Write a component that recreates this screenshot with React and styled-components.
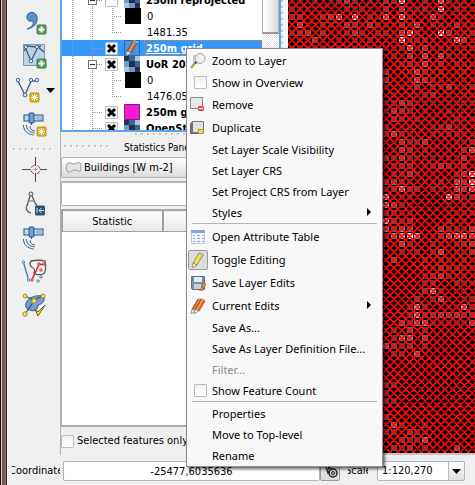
import React from "react";
import styled, { createGlobalStyle, css } from "styled-components";

const panelFont = '"DejaVu Sans Condensed", "Noto Sans", sans-serif';
const menuFont = '"Noto Sans", "Open Sans", sans-serif';
const crossMark =
  "url(\"data:image/svg+xml,%3Csvg xmlns='http://www.w3.org/2000/svg' viewBox='0 0 11 11'%3E%3Cpath d='M2 2L9 9M9 2L2 9' stroke='black' stroke-width='3'/%3E%3C/svg%3E\")";

const GlobalStyle = createGlobalStyle`
  * { box-sizing: border-box; }
  body { margin: 0; background: #efefef; overflow: hidden; }
  button, input, select { font: inherit; color: inherit; margin: 0; }
`;

const Page = styled.div`
  position: relative;
  display: flex;
  min-height: 100vh;
  font: 11px/16px ${panelFont};
  color: #000;
  background: #efefef;
`;

const WindowEdge = styled.div`
  flex: 0 0 8px;
  background: linear-gradient(90deg, #17100f 0 1px, #d9cfcc 1px 2px, #7a5a55 2px 5px, #94746e 5px 6px, #2a1a18 6px 7px, #fff 7px);
`;

const Workspace = styled.div`
  flex: 1;
  min-width: 0;
  display: flex;
  flex-direction: column;
`;

const Main = styled.main`
  flex: 1;
  min-height: 0;
  display: flex;
`;

const Toolbar = styled.div`
  flex: 0 0 52px;
  display: flex;
  flex-direction: column;
  padding-top: 5px;
`;

const Tool = styled.button`
  display: flex;
  align-items: center;
  height: 34px;
  padding: 0 0 0 ${(p) => (p.$menu ? "6px" : "13px")};
  gap: 4px;
  border: 0;
  background: none;
`;

const Grip = styled.div`
  flex: ${(p) => (p.$vertical ? "0 0 7px" : `0 0 ${p.$length}px`)};
  height: ${(p) => (p.$vertical ? "auto" : "6px")};
  background-color: #efefef;
  background-image: radial-gradient(circle at 1px 1px, #c3c3c3 1px, transparent 1px),
    radial-gradient(circle at 2px 2px, #fff 1px, transparent 1px);
  background-size: 6px 6px;
  ${(p) => p.$vertical && css`border-right: 2px solid #f8f8f8;`}
`;

const ToolGrip = styled.div`
  height: 12px;
  padding: 7px 6px 0 5px;
  display: flex;
`;

const Docks = styled.div`
  flex: 0 0 221px;
  min-width: 0;
  display: flex;
  flex-direction: column;
`;

const LayersPanel = styled.section`
  display: flex;
  height: 132px;
  overflow: hidden;
  border: 2px solid #5ba6ee;
  border-top: 0;
  background: #fff;
`;

const Tree = styled.ul`
  flex: 1;
  min-width: 0;
  list-style: none;
  margin: -8px 0 0;
  padding: 0;
`;

const TreeRow = styled.li`
  display: flex;
  align-items: center;
  height: 16px;
  white-space: nowrap;
  background: ${(p) => (p.$selected ? "#3397fd" : "transparent")};
`;

const Guides = styled.svg`
  flex: none;
  height: 16px;
  fill: none;
  stroke: #999;
  stroke-dasharray: 1 1;
  shape-rendering: crispEdges;
`;

const CheckBox = styled.input`
  appearance: none;
  flex: none;
  width: 13px;
  height: 13px;
  border: 1px solid #bcbcbc;
  border-radius: 1px;
  background: ${crossMark} center / 0 0 no-repeat, linear-gradient(#f0f0f0, #fff);
  &:checked { background-size: 11px 11px, auto; }
`;

const LayerIcon = styled.svg`
  flex: none;
  width: 16px;
  height: 16px;
  margin-left: ${(p) => (p.$child ? "1px" : "6px")};
  margin-right: 4px;
`;

const LayerName = styled.label`
  flex: 1;
  min-width: 0;
  height: 16px;
  line-height: 18px;
  padding-left: 2px;
  overflow: hidden;
  font-weight: ${(p) => (p.$bold ? 700 : 400)};
  ${(p) =>
    p.$selected &&
    css`
      color: #fff;
      text-decoration: underline;
      outline: 1px dotted #e08020;
      outline-offset: -1px;
    `}
`;

const ScrollTrack = styled.div`
  flex: 0 0 17px;
  background: repeating-conic-gradient(#e6e6e6 0 25%, #fff 0 50%) 0 0 / 2px 2px;
`;

const ScrollThumb = styled.div`
  height: 34px;
  border: 1px solid #b0b0b0;
  border-top: 0;
  border-bottom: 2px solid #999;
  background: linear-gradient(90deg, #fff, #ddd);
`;

const StatsPanel = styled.section`
  flex: 1;
  min-height: 0;
  display: flex;
  flex-direction: column;
  border-left: 1px solid #b0b0b0;
`;

const SplitRow = styled.div`
  display: flex;
  justify-content: center;
  padding-top: 1px;
`;

const StatsTitle = styled.h2`
  display: flex;
  align-items: center;
  gap: 12px;
  height: 18px;
  margin: 0;
  padding: 0 3px;
  font: 10px/16px ${panelFont};
  white-space: nowrap;
`;

const LayerCombo = styled.button`
  display: flex;
  align-items: center;
  gap: 2px;
  height: 21px;
  padding: 0 3px;
  border: 1px solid #b4b4b4;
  border-radius: 2px;
  background: linear-gradient(#fff, #dcdcdc);
  white-space: nowrap;
`;

const FieldInput = styled.input`
  height: 25px;
  margin: 3px 0;
  border: 1px solid #b4b4b4;
  border-width: 2px 1px 1px;
  border-radius: 2px;
  background: #fff;
`;

const TableFrame = styled.div`
  flex: 1;
  border: 1px solid #aaa;
  border-bottom-width: 2px;
  background: #fff;
`;

const StatsTable = styled.table`
  width: 100%;
  border-collapse: collapse;
  table-layout: fixed;
`;

const HeaderCell = styled.th`
  width: ${(p) => (p.$first ? "100px" : "auto")};
  height: 21px;
  padding: 2px 0 0;
  border: 1px solid #a0a0a0;
  border-width: 1px 2px 1px 1px;
  background: linear-gradient(#fcfcfc, #e8e8e8);
  font-weight: 400;
`;

const SelectedOnly = styled.div`
  display: flex;
  align-items: center;
  gap: 3px;
  height: 28px;
  white-space: nowrap;
`;

const MapCanvas = styled.div`
  flex: 1;
  min-width: 0;
  border-bottom: 2px solid #c4c4c4;
  background: #000;
  overflow: hidden;
`;

const MapDrawing = styled.svg`
  display: block;
`;

const StatusBar = styled.footer`
  display: flex;
  align-items: center;
  height: 30px;
  padding: 2px 0 0 4px;
  white-space: nowrap;
`;

const StatusLabel = styled.label`
  flex: 0 0 ${(p) => p.$width}px;
  overflow: hidden;
  text-indent: -3px;
`;

const CoordinateInput = styled.input`
  flex: 1 1 257px;
  min-width: 0;
  max-width: 257px;
  height: 20px;
  margin-left: 3px;
  padding: 0;
  border: 1px solid #b4b4b4;
  border-radius: 2px;
  background: #fff;
  text-align: center;
`;

const ExtentsButton = styled.button`
  flex: 0 0 20px;
  height: 20px;
  margin: 0 8px 0 0;
  padding: 0;
  border: 1px solid #999;
  border-radius: 2px;
  background: #ddd;
`;

const ScaleBox = styled.div`
  flex: 0 0 88px;
  display: flex;
  height: 20px;
  margin: 0 10px 0 9px;
  border: 1px solid #b4b4b4;
  border-radius: 2px;
  background: #fff;
`;

const ScaleSelect = styled.select`
  appearance: none;
  flex: 1;
  min-width: 0;
  padding: 0 4px;
  border: 0;
  background: none;
`;

const ScaleArrow = styled.div`
  flex: 0 0 16px;
  display: grid;
  place-items: center;
  border-left: 1px solid #bbb;
  background: linear-gradient(#fff, #e0e0e0);
`;

const Menu = styled.div`
  position: absolute;
  left: 186px;
  top: 48px;
  width: 197px;
  display: flex;
  flex-direction: column;
  border: 1px solid #8c8c8c;
  background: #f8f8f8;
  box-shadow: 2px 2px 3px rgba(0, 0, 0, 0.6);
  font: 11px/16px ${menuFont};
`;

const itemStyles = css`
  display: flex;
  align-items: center;
  height: ${(p) => (p.$tall ? "23px" : "21px")};
  padding: 0 9px 0 1px;
  border: 0;
  background: none;
  font: inherit;
  color: ${(p) => (p.disabled ? "#8a8a8a" : "#000")};
  text-align: left;
  white-space: nowrap;
`;

const MenuButton = styled.button`${itemStyles}`;
const MenuCheck = styled.label`${itemStyles}`;

const MenuSlot = styled.span`
  flex: 0 0 20px;
  display: flex;
  justify-content: ${(p) => (p.$check ? "flex-end" : "center")};
  align-items: center;
  height: 20px;
  margin-right: 4px;
  border: 1px solid ${(p) => (p.$pressed ? "#999" : "transparent")};
  border-radius: 2px;
  background: ${(p) => (p.$pressed ? "#dcdcdc" : "none")};
`;

const MenuText = styled.span`
  flex: 1;
`;

const Separator = styled.hr`
  width: auto;
  height: 2px;
  margin: 0 5px;
  border: 0;
  border-top: 1px solid #b4b4b4;
`;

/* Lit cells of the raster: row -> [column, brightness 0-9] */
const litCells = {
  0: "7:5 14:9 12:4 19:7 6:3 8:3 17:3", 1: "14:5 19:8 12:4 9:3 17:3",
  2: "0:4 1:4 4:4 5:5 6:7 8:8 12:7 14:8 18:6 10:3 15:3", 3: "1:6 7:5 8:4 10:5 16:6 14:4 21:5",
  4: "0:3 1:4 2:5 4:4 8:5 7:3 14:6 15:8 19:9 20:5 11:3 12:3", 5: "3:5 14:9 21:8 22:5 15:3 16:3",
  6: "15:7 17:5 14:3", 7: "15:5 17:6 19:6", 8: "15:4 17:6 19:4", 9: "12:5 16:6 17:4", 10: "12:5 16:6 17:5",
  11: "16:4 18:3 20:5 19:3", 12: "18:4", 13: "14:5 15:4 13:3", 14: "14:4 13:5 15:3", 15: "13:4 16:3",
  16: "20:5 12:3", 17: "13:6 12:4 14:3 20:3 21:3", 18: "14:5 17:5 15:3", 19: "14:5 15:4 23:6 17:3 22:4",
  20: "12:4 14:5 22:5 13:3 15:3", 21: "14:4 15:4 19:5 20:4 22:4 18:3", 22: "13:3 15:5 22:5 23:9 14:3",
  23: "12:4 13:5 21:6 22:5 23:9 14:3", 24: "13:4 14:7 15:4 16:4 21:6 22:5 23:7", 25: "12:8 20:8 21:5",
  26: "12:7 13:5 14:3", 27: "12:4 13:3", 28: "12:8 13:4 15:4 14:3", 29: "12:6 13:4 14:6 15:5 19:5 23:5 20:3",
  30: "13:6 14:7 15:9 16:7 19:4 20:6 21:7 22:7 23:6", 31: "14:6 15:3 22:4 23:5 21:3", 32: "14:3 19:6 23:4 18:3",
  33: "13:5 19:3 22:3", 34: "19:4 21:3 20:3", 35: "18:4 19:5 17:3", 36: "18:3 17:3", 37: "18:7 17:4", 38: "19:6 16:4 23:3",
  39: "16:7 22:7 15:3 17:3 23:3", 40: "16:7 15:3 17:4 18:4 19:5 20:5 21:5 22:4 23:4", 41: "14:5 16:6 17:6 23:5 15:3",
  42: "15:5 13:3 17:3", 43: "14:6 15:6 17:5 13:3", 44: "12:6 13:4 14:3 15:4 17:3", 45: "14:3 16:6 13:3",
  49: "12:3 13:3", 50: "12:3", 51: "12:3 13:3", 53: "12:4", 54: "13:6 14:3", 55: "13:3 15:4 16:3 12:3",
  56: "14:4 17:6 16:3 15:3", 57: "13:4 15:4 17:3 21:5 14:3",
};

const shade = (v) => {
  const g = [0, 26, 42, 62, 84, 110, 140, 175, 210, 250][v];
  return `rgb(${g},${g},${g})`;
};

function buildCells() {
  const cells = [];
  for (let r = 0; r < 58; r += 1) {
    const lit = Object.fromEntries((litCells[r] || "").split(" ").map((s) => s.split(":").map(Number)));
    for (let c = 0; c < 24; c += 1) {
      const noise = (c * 73 + r * 151 + c * r * 17) % 7;
      const quiet = (r > 24 && r < 30 && c > 15 && c < 20) || (r > 32 && c < 17) || (r > 41 && c > 17) || (r > 44 && r < 53);
      const dim = noise < 2 ? 1 : noise < 4 ? 2 : noise < 5 ? 3 : 0;
      const v = lit[c] ?? (quiet ? 0 : dim);
      if (v) cells.push({ c, r, v });
    }
  }
  return cells;
}
const cells = buildCells();
const P = 7.84;
const mapHeight = 453;

/* Long diagonals that cross at the centre of every cell */
const hatch = Array.from({ length: 110 }, (_, k) => {
  const fall = 1.2 - 4 + (k - 40) * P;
  const rise = 1.2 + 4 + k * P;
  return `M0 ${fall}l900 900M0 ${rise}l900 -900`;
}).join("");

function RasterMap() {
  return (
    <MapCanvas>
      <MapDrawing width="100%" height={mapHeight} aria-label="Map">
        {cells.map(({ c, r, v }) => (
          <rect key={`${c}-${r}`} x={c * P + 0.9} y={r * P - 1.8} width="6" height="6" fill={shade(v)} shapeRendering="crispEdges" />
        ))}
        <path d={hatch} stroke="#f90808" strokeWidth="1.7" fill="none" />
      </MapDrawing>
    </MapCanvas>
  );
}

const PlusBadge = () => (
  <g>
    <rect x="16" y="17" width="9" height="9" rx="1" fill="#5a9a5a" stroke="#3f7d42" />
    <path d="M20.5 18.5v6M17.5 21.5h6" stroke="#fff" strokeWidth="2" />
  </g>
);
const StarBadge = () => (
  <g>
    <rect x="16" y="17" width="9" height="9" rx="1" fill="#d9b520" stroke="#b99612" />
    <path d="M20.5 18v7M17 21.5h7M18 19l5 5M23 19l-5 5" stroke="#fff" strokeWidth="1" />
  </g>
);
const Satellite = ({ star }) => (
  <g>
    <rect x="3" y="5" width="19" height="6" fill="#c3dcf2" stroke="#28517e" />
    <path d="M15 6h6v4h-6z" fill="#9ebfe2" />
    <rect x="8" y="3" width="5" height="10" rx="1" fill="#729fcf" stroke="#28517e" />
    <path d="M10.500 13v2" stroke="#28517e" />
    <path d="M9 16c0 3 2 5 5 5M5.500 15c0 5 3 7 8 8M2.500 15c0 6 4 9 10 10" fill="none" stroke="#3c6387" strokeWidth="1" />
    {star && <StarBadge />}
  </g>
);

const toolIcons = {
  comma: (
    <>
      <path d="M6 21c5-2 7-5 6-8-4 1-7-1-6-5 1-5 9-5 10 1 1 6-3 11-10 12z" fill="#5e8fc7" stroke="#34638f" />
      <PlusBadge />
    </>
  ),
  polygon: (
    <>
      <path d="M2.500 2.500h21v21h-21z" fill="#bcd2e8" stroke="#7f98ae" />
      <path d="M4 5l6 14 7-14 6 5M3 9l3-5 10 1 4-1" fill="none" stroke="#44586c" strokeWidth="1.300" />
      <g fill="#e8f1fa" stroke="#456a8c"><circle cx="5" cy="5" r="1.600" /><circle cx="16" cy="5" r="1.600" /><circle cx="10" cy="19" r="1.800" /></g>
      <PlusBadge />
    </>
  ),
  vertices: (
    <>
      <path d="M4 5l7 14 6-14h6" fill="none" stroke="#4f6477" strokeWidth="1.400" />
      <g fill="#dbeafa" stroke="#3e6d9c"><circle cx="4" cy="4" r="1.700" /><circle cx="11" cy="19" r="1.900" /><circle cx="17" cy="4" r="1.700" /><circle cx="23" cy="4" r="1.700" /></g>
      <StarBadge />
    </>
  ),
  satelliteStar: <Satellite star />,
  crosshair: (
    <>
      <path d="M14.500 1v9M14.500 17v9M1 13.500h9M19 13.500h7" stroke="#4c4c4c" />
      <path d="M14.500 12v3M13 13.500h3" stroke="#999" />
      <circle cx="14.500" cy="13.500" r="4.500" fill="none" stroke="#c63b3b" strokeDasharray="4 3.070" strokeDashoffset="-1.500" />
    </>
  ),
  compass: (
    <>
      <path d="M9 6L6 16M11 6l4 9" stroke="#555" strokeWidth="1.200" /><path d="M7 11h7" stroke="#777" />
      <circle cx="10" cy="4" r="2" fill="#ddd" stroke="#555" />
      <path d="M6 15c-2 4 0 7 4 8M15 14l1 2" fill="none" stroke="#666" strokeWidth="1.300" />
      <rect x="14" y="15.500" width="10" height="10" rx="1.500" fill="#34526b" />
      <path d="M16 18v5M18 20.500h5M20.500 18l-2.500 2.500 2.500 2.500" fill="none" stroke="#cfe0ee" />
    </>
  ),
  satellite: <Satellite />,
  reshape: (
    <>
      <path d="M10 3c4-1 11-1 14 0 1 5 1 12-2 13-3 1-8 1-9-1 1-3 1-4-1-5-3-1-4-5-2-7z" fill="#f3f3f3" stroke="#555" strokeWidth="1.300" />
      <path d="M2.500 4.500l5 17" stroke="#3f79b8" strokeWidth="1.300" />
      <path d="M11 21.500l7-15h5" fill="none" stroke="#e01b1b" strokeWidth="1.500" />
      <g fill="#fff" stroke="#3f79b8"><circle cx="2.500" cy="4" r="1.200" /><circle cx="7.500" cy="22" r="1.200" /><circle cx="20" cy="19" r="1.200" /><circle cx="17" cy="23" r="1.200" /></g>
      <g fill="#fff" stroke="#e01b1b"><circle cx="18" cy="6" r="1.200" /><circle cx="23" cy="6" r="1.200" /><circle cx="20" cy="12" r="1.200" /><circle cx="11" cy="22" r="1.200" /></g>
    </>
  ),
  topology: (
    <>
      <path d="M6 9c3-5 12-6 17-5 1 6-2 8-6 9 0 5-4 7-9 5-4-2-4-6-2-9z" fill="#729fcf" stroke="#35628f" />
      <path d="M4 4l9 4 9-4M13 9L4 22" fill="none" stroke="#3d5266" strokeWidth="1.200" />
      <g fill="#fce94f" stroke="#a08c32"><circle cx="4" cy="4" r="2" /><circle cx="22" cy="4" r="2" /><rect x="11" y="7" width="4" height="4" /><circle cx="4" cy="22" r="2.200" /></g>
      <path d="M14 17l3 3 7-7-7 11z" fill="#ffe100" stroke="#6d6215" />
    </>
  ),
};

function ToolIcon({ name }) {
  return <svg width="28" height="28" viewBox="0 0 28 28">{toolIcons[name]}</svg>;
}

const Arrow = ({ right }) => (
  <svg width="9" height="9" viewBox="0 0 9 9"><path d={right ? "M3 0v8l4-4z" : "M0 2h9L4.500 7z"} /></svg>
);

const Pencil = ({ color, dark, x = 0 }) => (
  <g transform={`translate(${x} 0)`}>
    <path d="M9 1l4 2-6 10-4-2z" fill={color} stroke={dark} strokeWidth=".8" />
    <path d="M10.500 2L5 12" stroke="#fff" strokeOpacity=".45" />
    <path d="M3 11l4 2-5 3z" fill="#eee" stroke="#777" strokeWidth=".7" />
    <path d="M9 1l1-1 4 2-1 1z" fill="#bbb" />
  </g>
);

const menuIcons = {
  zoom: <><path d="M3 2h6v8H3z" fill="#ccc" /><circle cx="10" cy="5.500" r="5" fill="#eeeeee" fillOpacity=".85" stroke="#a5a5a5" /><path d="M5 10l-4 5" stroke="#b79a4a" strokeWidth="2.200" /><path d="M6.500 9L5 10.500" stroke="#444" strokeWidth="2" /></>,
  remove: <><path d="M.5.5h12v11H.5z" fill="#e8e8e8" stroke="#888" /><rect x="8" y="9" width="6" height="5" rx="1" fill="#ed4b50" /><path d="M9 11.500h4" stroke="#fff" /></>,
  duplicate: <><path d="M.5 3.500l2-2v10h10v2H.5z" fill="#777" stroke="#666" /><path d="M2.500 1.500h11v11h-11z" fill="#e3e3dc" stroke="#777" /><rect x="8.500" y="9.500" width="5" height="4" fill="#f1dc69" stroke="#b8992e" /></>,
  table: <><path d="M1.500 1.500h13v13h-13z" fill="#f4f8fb" stroke="#b4c8de" /><path d="M1 1h14v3H1z" fill="#7faade" /><path d="M3 6.500h2M7 6.500h3M12 6.500h2M3 9.500h2M7 9.500h3M12 9.500h2M3 12.500h2M7 12.500h3M12 12.500h2" stroke="#8ba9c8" /></>,
  pencil: <Pencil color="#e4d63f" dark="#8f8630" />,
  save: <><path d="M1.500 1.500h13v13h-12l-1-1z" fill="#7590aa" stroke="#596f82" /><path d="M4 2h8v5H4z" fill="#e6edf2" /><path d="M4 9h7v5H4z" fill="#c7ced4" /><path d="M14 7l2 2-4 7-3 1z" fill="#e98539" stroke="#a8501c" strokeWidth=".6" /></>,
  edits: <><Pencil color="#d4713a" dark="#8b421e" x={-1} /><Pencil color="#ec6b22" dark="#9c4210" x={2} /></>,
};

const menuItems = [
  { text: "Zoom to Layer", icon: "zoom" },
  { text: "Show in Overview", check: true },
  { text: "Remove", icon: "remove" },
  { text: "Duplicate", icon: "duplicate" },
  { text: "Set Layer Scale Visibility" },
  { text: "Set Layer CRS" },
  { text: "Set Project CRS from Layer" },
  { text: "Styles", sub: true },
  null,
  { text: "Open Attribute Table", icon: "table" },
  { text: "Toggle Editing", icon: "pencil", pressed: true },
  { text: "Save Layer Edits", icon: "save" },
  { text: "Current Edits", icon: "edits", sub: true },
  { text: "Save As..." },
  { text: "Save As Layer Definition File..." },
  { text: "Filter...", disabled: true },
  { text: "Show Feature Count", check: true },
  null,
  { text: "Properties" },
  { text: "Move to Top-level" },
  { text: "Rename" },
];

function MenuItem({ item }) {
  if (item.check) {
    return (
      <MenuCheck>
        <MenuSlot $check><CheckBox type="checkbox" /></MenuSlot>
        <MenuText>{item.text}</MenuText>
      </MenuCheck>
    );
  }
  return (
    <MenuButton type="button" role="menuitem" $tall={Boolean(item.icon)} disabled={item.disabled}>
      <MenuSlot $pressed={item.pressed}>
        {item.icon && <svg width="16" height="16" viewBox="0 0 16 16">{menuIcons[item.icon]}</svg>}
      </MenuSlot>
      <MenuText>{item.text}</MenuText>
      {item.sub && <Arrow right />}
    </MenuButton>
  );
}

const layerIcons = {
  raster: <><path d="M0 0h16v16H0z" fill="#729bc9" /><path d="M0 0h5v5H0zM5 5h6v6H5zM11 11h5v5h-5z" fill="#1d3148" /><path d="M11 0h5v5h-5zM0 11h5v5H0z" fill="#a8c6e6" /><path d="M5 0h6v5H5zM11 5h5v6h-5z" fill="#3f648d" /></>,
  black: <path d="M0 0h16v16H0z" fill="#000" />,
  magenta: <path d="M.5.5h15v15H.5z" fill="#f51bd5" stroke="#8b187a" />,
  pencil: <><path d="M.5.5h15v15H.5z" fill="#4a94dc" stroke="#2c6bab" /><Pencil color="#b87752" dark="#734328" /></>,
};

const layers = [
  { name: "250m reprojected", icon: "raster", expand: true },
  { name: "0", icon: "black", child: true },
  { name: "1481.35", child: true, last: true },
  { name: "250m grid", icon: "pencil", checked: true, selected: true },
  { name: "UoR 2011", icon: "raster", expand: true, checked: true },
  { name: "0", icon: "black", child: true },
  { name: "1476.05", child: true, last: true },
  { name: "250m grid", icon: "magenta", checked: true },
  { name: "OpenStreetMap", icon: "raster", checked: true },
];

function Layer({ layer, index }) {
  const id = `layer-${index}`;
  return (
    <TreeRow $selected={layer.selected}>
      <Guides width={layer.child ? 62 : 43}>
        <path d="M10.500 0v16M30.500 0v16" />
        {layer.child ? <path d={layer.last ? "M50.500 0v8M50 8.500h10" : "M50.500 0v16M50 8.500h10"} /> : <path d="M31 8.500h10" />}
        {layer.expand && (
          <g strokeDasharray="none" stroke="#777">
            <path d="M26.500 4.500h8v8h-8z" fill="#fff" />
            <path d="M28 8.500h5" stroke="#333" />
          </g>
        )}
      </Guides>
      {!layer.child && <CheckBox id={id} type="checkbox" defaultChecked={layer.checked} />}
      <LayerIcon viewBox="0 0 16 16" $child={layer.child}>{layerIcons[layer.icon]}</LayerIcon>
      <LayerName as={layer.child ? "span" : "label"} htmlFor={layer.child ? undefined : id} $bold={!layer.child} $selected={layer.selected}>
        {layer.name}
      </LayerName>
    </TreeRow>
  );
}

export default function App() {
  return (
    <Page>
      <GlobalStyle />
      <WindowEdge />
      <Workspace>
        <Main>
          <Toolbar role="toolbar">
            <Tool aria-label="Add text delimited layer"><ToolIcon name="comma" /></Tool>
            <Tool aria-label="Add virtual layer"><ToolIcon name="polygon" /></Tool>
            <Tool $menu aria-label="New layer"><ToolIcon name="vertices" /><Arrow /></Tool>
            <Tool aria-label="New GPX layer"><ToolIcon name="satelliteStar" /></Tool>
            <ToolGrip><Grip $length={41} /></ToolGrip>
            <Tool aria-label="Coordinate capture"><ToolIcon name="crosshair" /></Tool>
            <Tool aria-label="CAD tools"><ToolIcon name="compass" /></Tool>
            <Tool aria-label="GPS tools"><ToolIcon name="satellite" /></Tool>
            <Tool aria-label="Reshape features"><ToolIcon name="reshape" /></Tool>
            <Tool aria-label="Topology checker"><ToolIcon name="topology" /></Tool>
          </Toolbar>
          <Docks>
            <LayersPanel aria-label="Layers">
              <Tree>
                {layers.map((layer, i) => <Layer key={i} layer={layer} index={i} />)}
              </Tree>
              <ScrollTrack><ScrollThumb /></ScrollTrack>
            </LayersPanel>
            <StatsPanel>
              <SplitRow><Grip $length={72} /></SplitRow>
              <StatsTitle><Grip $length={48} />Statistics Panel</StatsTitle>
              <LayerCombo type="button">
                <svg width="17" height="14" viewBox="0 0 17 14"><path d="M2 3c2-3 4 0 7 0 2 0 6-3 7 0 0 2-1 3 0 6-1 3-4 0-6 0-3 0-6 4-8 1-1-2-1-5 0-7z" fill="#e4e4e4" stroke="#999" /></svg>
                Buildings [W m-2]
              </LayerCombo>
              <FieldInput aria-label="Field or expression" />
              <TableFrame>
                <StatsTable>
                  <thead><tr><HeaderCell $first>Statistic</HeaderCell><HeaderCell>Value</HeaderCell></tr></thead>
                </StatsTable>
              </TableFrame>
              <SelectedOnly>
                <CheckBox id="selected-only" type="checkbox" />
                <label htmlFor="selected-only">Selected features only</label>
              </SelectedOnly>
            </StatsPanel>
          </Docks>
          <Grip $vertical />
          <RasterMap />
        </Main>
        <StatusBar>
          <StatusLabel $width={48} htmlFor="coordinate">Coordinate:</StatusLabel>
          <CoordinateInput id="coordinate" defaultValue="-25477,6035636" />
          <ExtentsButton aria-label="Toggle extents">
            <svg width="17" height="17" viewBox="0 0 17 17" fill="none" stroke="#222">
              <path d="M3 3l3 8 2-3 4 4M8 2l-2 6M3 3l7 4" strokeWidth="1.300" /><circle cx="11" cy="11" r="4" fill="#ccc" strokeWidth="1.500" /><circle cx="11" cy="11" r="1.500" />
            </svg>
          </ExtentsButton>
          <StatusLabel $width={20} htmlFor="scale">Scale</StatusLabel>
          <ScaleBox>
            <ScaleSelect id="scale"><option>1:120,270</option></ScaleSelect>
            <ScaleArrow><Arrow /></ScaleArrow>
          </ScaleBox>
        </StatusBar>
      </Workspace>
      <Menu role="menu">
        {menuItems.map((item, i) => (item ? <MenuItem key={i} item={item} /> : <Separator key={i} />))}
      </Menu>
    </Page>
  );
}
